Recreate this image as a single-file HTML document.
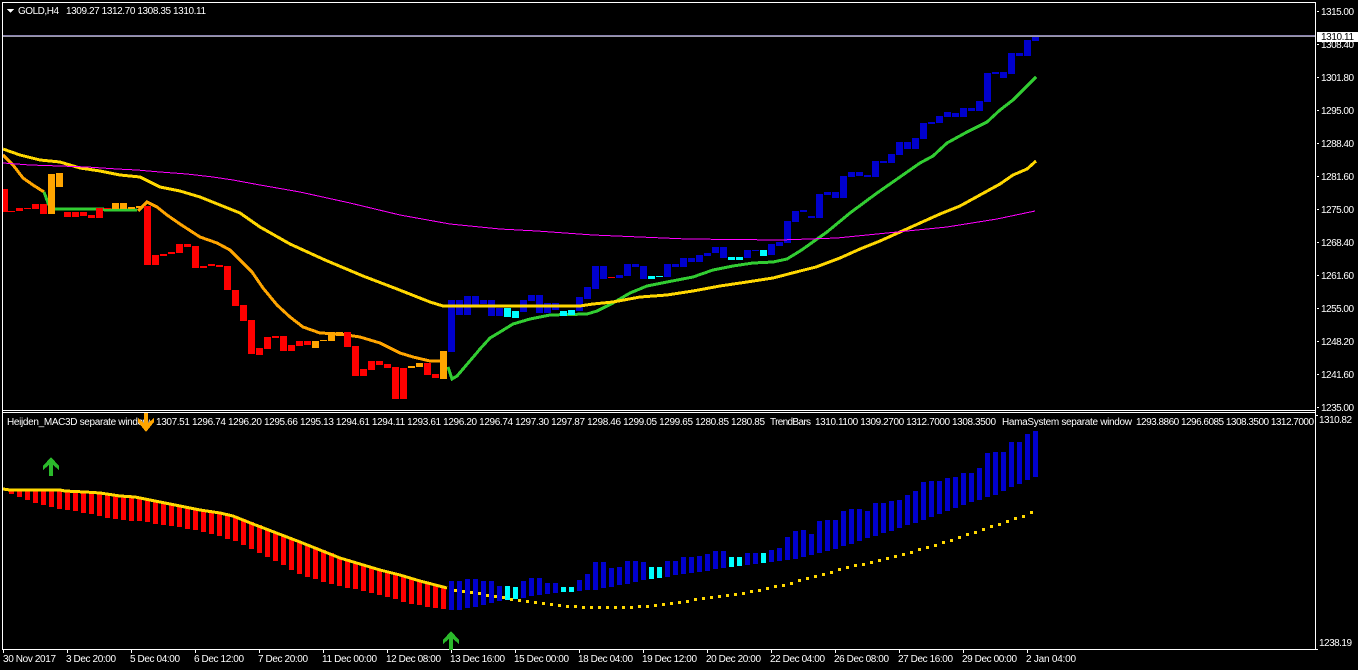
<!DOCTYPE html>
<html><head><meta charset="utf-8"><title>GOLD,H4</title>
<style>
html,body{margin:0;padding:0;background:#000;width:1358px;height:670px;overflow:hidden}
svg{display:block;position:absolute;left:0;top:0}
text{font-family:"Liberation Sans",sans-serif;font-size:10px;fill:#fff}
</style></head><body>
<svg width="1358" height="670" viewBox="0 0 1358 670" xmlns="http://www.w3.org/2000/svg">
<rect width="1358" height="670" fill="#000"/>
<defs><clipPath id="cp"><rect x="3" y="413" width="1312" height="20"/></clipPath></defs>
<g shape-rendering="crispEdges">
<!-- MAs below candles -->
<polyline fill="none" stroke="#ffa500" stroke-width="3" points="3,155 13,165 23,178 33,185 44,192"/>
<polyline fill="none" stroke="#ffa500" stroke-width="3" points="138,211 147,202 157,207 167,215 180,224 200,237 217,243 230,250 240,260 252,272 263,288 277,305 290,317 303,327 320,333 340,334 360,337 380,343 400,353 413,357 430,361 443,361"/>
<polyline fill="none" stroke="#32cd32" stroke-width="3" points="44,192 48,203 51,209 103,209 105,210 137,210"/>
<polyline fill="none" stroke="#32cd32" stroke-width="3" points="448,367 452,379 457,376 475,355 480,349 490,338 500,332 513,324 530,319 550,315 587,314 597,311 613,303 630,293 647,286 667,282 693,277 713,270 733,266 753,263 773,262 787,259 800,251 803,249 827,232 850,213 877,193 900,177 920,163 933,156 947,143 967,132 987,122 1000,110 1013,100 1036,77"/>
<!-- candles -->
<path fill="#ff0000" d="M3 189h5v23h-5zM8 211h7v1h-7zM16 208h7v3h-7zM24 208h7v1h-7zM32 204h7v5h-7zM40 204h7v10h-7zM64 212h7v5h-7zM72 212h7v5h-7zM80 212h7v4h-7zM88 215h7v3h-7zM96 208h7v10h-7zM104 208h7v1h-7zM144 206h7v59h-7zM152 255h7v10h-7zM160 254h7v2h-7zM168 252h7v2h-7zM176 244h7v9h-7zM184 244h7v3h-7zM192 246h7v22h-7zM200 266h7v2h-7zM208 264h7v2h-7zM216 265h7v2h-7zM224 266h7v24h-7zM232 290h7v16h-7zM240 305h7v16h-7zM248 320h7v34h-7zM256 348h7v7h-7zM264 337h7v12h-7zM272 336h7v2h-7zM280 336h7v15h-7zM288 345h7v6h-7zM296 341h7v5h-7zM304 341h7v4h-7zM344 332h7v15h-7zM352 346h7v30h-7zM360 369h7v7h-7zM368 361h7v9h-7zM376 361h7v4h-7zM384 364h7v4h-7zM392 367h7v32h-7zM400 368h7v31h-7zM424 363h7v12h-7zM432 374h7v4h-7zM608 277h7v1h-7z"/>
<path fill="#ffa500" d="M48 174h7v40h-7zM56 173h7v14h-7zM112 203h7v6h-7zM120 203h7v6h-7zM128 207h7v2h-7zM136 206h7v2h-7zM312 341h7v7h-7zM320 340h7v1h-7zM328 333h7v8h-7zM336 332h7v4h-7zM408 366h7v2h-7zM416 363h7v4h-7zM440 351h7v28h-7z"/>
<path fill="#0000cd" d="M448 300h7v52h-7zM456 300h7v15h-7zM464 296h7v19h-7zM472 296h7v9h-7zM480 300h7v4h-7zM488 300h7v16h-7zM496 308h7v8h-7zM520 300h7v12h-7zM528 295h7v6h-7zM536 295h7v18h-7zM544 303h7v10h-7zM552 303h7v7h-7zM576 297h7v14h-7zM584 287h7v12h-7zM592 266h7v23h-7zM600 266h7v13h-7zM616 275h7v3h-7zM624 264h7v12h-7zM632 264h7v3h-7zM640 266h7v13h-7zM664 264h7v13h-7zM672 264h7v3h-7zM680 258h7v9h-7zM688 258h7v4h-7zM696 255h7v7h-7zM704 253h7v3h-7zM712 247h7v6h-7zM720 247h7v11h-7zM744 250h7v8h-7zM752 250h7v1h-7zM768 244h7v11h-7zM776 242h7v4h-7zM784 221h7v22h-7zM792 211h7v11h-7zM800 210h7v2h-7zM808 216h7v2h-7zM816 194h7v24h-7zM824 192h7v3h-7zM832 192h7v6h-7zM840 176h7v22h-7zM848 172h7v5h-7zM856 172h7v4h-7zM864 175h7v2h-7zM872 161h7v16h-7zM880 161h7v2h-7zM888 154h7v9h-7zM896 142h7v13h-7zM904 142h7v7h-7zM912 138h7v11h-7zM920 123h7v16h-7zM928 122h7v2h-7zM936 116h7v7h-7zM944 112h7v5h-7zM952 113h7v4h-7zM960 108h7v9h-7zM968 108h7v3h-7zM976 101h7v10h-7zM984 73h7v29h-7zM992 72h7v2h-7zM1000 72h7v6h-7zM1008 53h7v21h-7zM1016 53h7v3h-7zM1024 40h7v16h-7zM1032 36h7v5h-7z"/>
<path fill="#00ffff" d="M504 308h7v9h-7zM512 311h7v7h-7zM560 311h7v5h-7zM568 310h7v5h-7zM648 276h7v3h-7zM656 276h7v1h-7zM728 257h7v3h-7zM736 257h7v3h-7zM760 250h7v6h-7z"/>
<!-- yellow and magenta on top -->
<polyline fill="none" stroke="#ffd700" stroke-width="3" points="3,149 20,155 40,160 60,162 80,168 100,171 120,175 140,177 160,187 180,191 200,197 220,205 240,213 260,227 290,244 325,260 363,276 397,289 430,302 443,306 580,306 593,304 613,302 640,297 667,295 693,291 720,286 747,282 773,278 800,271 816,267 840,258 860,249 880,241 900,232 920,223 940,214 960,206 980,195 1000,184 1013,175 1027,169 1036,161"/>
<polyline fill="none" stroke="#ff00ff" stroke-width="1" points="3,163 30,165 60,166 87,167 117,169 137,170 160,172 187,174 213,177 233,180 260,185 300,192 350,203 400,215 450,224 500,229 537,231 593,235 640,237 687,239 780,240 837,238 897,232 947,227 997,219 1035,211"/>
<!-- current price line -->
<rect x="3" y="35" width="1312" height="1" fill="#8a82ae"/>
<rect x="3" y="36" width="1312" height="1" fill="#9a98a8"/>
<!-- lower panel bars -->
<path fill="#ff0000" d="M9 490h5v4h-5zM17 490h5v7h-5zM25 490h5v10h-5zM33 490h5v13h-5zM41 490h5v15h-5zM49 490h5v17h-5zM57 490h5v19h-5zM65 491h5v19h-5zM73 491h5v20h-5zM81 492h5v21h-5zM89 492h5v22h-5zM97 493h5v23h-5zM105 494h5v24h-5zM113 495h5v24h-5zM121 496h5v24h-5zM129 497h5v24h-5zM137 498h5v23h-5zM145 499h5v23h-5zM153 501h5v23h-5zM161 503h5v22h-5zM169 505h5v21h-5zM177 506h5v21h-5zM185 507h5v22h-5zM193 509h5v21h-5zM201 510h5v22h-5zM209 512h5v22h-5zM217 513h5v23h-5zM225 514h5v25h-5zM233 516h5v25h-5zM241 519h5v26h-5zM249 522h5v27h-5zM257 525h5v28h-5zM265 529h5v28h-5zM273 532h5v29h-5zM281 535h5v30h-5zM289 538h5v32h-5zM297 541h5v33h-5zM305 544h5v33h-5zM313 547h5v32h-5zM321 550h5v32h-5zM329 553h5v31h-5zM337 557h5v29h-5zM345 559h5v29h-5zM353 562h5v27h-5zM361 564h5v27h-5zM369 567h5v26h-5zM377 569h5v26h-5zM385 571h5v26h-5zM393 573h5v26h-5zM401 575h5v27h-5zM409 578h5v26h-5zM417 580h5v25h-5zM425 582h5v25h-5zM433 584h5v24h-5zM441 586h5v23h-5z"/>
<path fill="#0000cd" d="M449 581h5v29h-5zM457 581h5v29h-5zM465 579h5v29h-5zM473 579h5v28h-5zM481 581h5v24h-5zM489 581h5v22h-5zM497 586h5v15h-5zM521 581h5v17h-5zM529 578h5v18h-5zM537 578h5v17h-5zM545 583h5v11h-5zM553 583h5v10h-5zM577 580h5v11h-5zM585 574h5v16h-5zM593 562h5v28h-5zM601 562h5v26h-5zM609 568h5v19h-5zM617 567h5v18h-5zM625 561h5v23h-5zM633 561h5v21h-5zM641 562h5v18h-5zM665 561h5v16h-5zM673 561h5v14h-5zM681 557h5v17h-5zM689 557h5v16h-5zM697 556h5v16h-5zM705 554h5v17h-5zM713 551h5v18h-5zM721 551h5v17h-5zM745 553h5v12h-5zM753 553h5v11h-5zM769 550h5v12h-5zM777 548h5v13h-5zM785 537h5v23h-5zM793 531h5v28h-5zM801 530h5v27h-5zM809 534h5v21h-5zM817 521h5v32h-5zM825 520h5v31h-5zM833 520h5v29h-5zM841 511h5v35h-5zM849 509h5v35h-5zM857 509h5v32h-5zM865 511h5v27h-5zM873 503h5v33h-5zM881 503h5v30h-5zM889 501h5v30h-5zM897 500h5v28h-5zM905 495h5v30h-5zM913 491h5v32h-5zM921 482h5v38h-5zM929 481h5v36h-5zM937 481h5v33h-5zM945 478h5v33h-5zM953 477h5v31h-5zM961 473h5v32h-5zM969 473h5v29h-5zM977 468h5v32h-5zM985 453h5v44h-5zM993 452h5v43h-5zM1001 452h5v39h-5zM1009 442h5v45h-5zM1017 442h5v42h-5zM1025 434h5v46h-5zM1033 431h5v46h-5z"/>
<path fill="#00ffff" d="M505 586h5v14h-5zM513 587h5v12h-5zM561 587h5v5h-5zM569 587h5v5h-5zM649 567h5v12h-5zM657 567h5v11h-5zM729 557h5v10h-5zM737 557h5v9h-5zM761 553h5v10h-5z"/>
<polyline fill="none" stroke="#ffd700" stroke-width="3" points="3,489 10,490 60,490 65,491 85,492 100,493 120,496 135,497 150,500 180,506 200,510 220,513 233,516 253,524 300,542 320,550 340,558 360,564 380,570 400,575 420,581 447,588"/>
<path fill="#ffd700" d="M454 589h3v3h-3zM462 590h3v3h-3zM470 591h3v3h-3zM478 592h3v3h-3zM486 594h3v3h-3zM494 595h3v3h-3zM502 596h3v3h-3zM510 598h3v3h-3zM518 599h3v3h-3zM526 600h3v3h-3zM534 601h3v3h-3zM542 602h3v3h-3zM550 603h3v3h-3zM558 604h3v3h-3zM566 605h3v3h-3zM574 605h3v3h-3zM582 606h3v3h-3zM590 606h3v3h-3zM598 606h3v3h-3zM606 606h3v3h-3zM614 606h3v3h-3zM622 606h3v3h-3zM630 606h3v3h-3zM638 605h3v3h-3zM646 605h3v3h-3zM654 604h3v3h-3zM662 603h3v3h-3zM670 602h3v3h-3zM678 601h3v3h-3zM686 600h3v3h-3zM694 598h3v3h-3zM702 597h3v3h-3zM710 596h3v3h-3zM718 595h3v3h-3zM726 594h3v3h-3zM734 593h3v3h-3zM742 592h3v3h-3zM750 590h3v3h-3zM758 589h3v3h-3zM766 587h3v3h-3zM774 585h3v3h-3zM782 584h3v3h-3zM790 582h3v3h-3zM798 579h3v3h-3zM806 577h3v3h-3zM814 575h3v3h-3zM822 573h3v3h-3zM830 571h3v3h-3zM838 568h3v3h-3zM846 566h3v3h-3zM854 564h3v3h-3zM862 563h3v3h-3zM870 561h3v3h-3zM878 559h3v3h-3zM886 557h3v3h-3zM894 555h3v3h-3zM902 553h3v3h-3zM910 551h3v3h-3zM918 548h3v3h-3zM926 546h3v3h-3zM934 544h3v3h-3zM942 541h3v3h-3zM950 539h3v3h-3zM958 536h3v3h-3zM966 533h3v3h-3zM974 531h3v3h-3zM982 528h3v3h-3zM990 525h3v3h-3zM998 523h3v3h-3zM1006 520h3v3h-3zM1014 517h3v3h-3zM1022 515h3v3h-3zM1030 511h3v3h-3z"/>
<!-- frame -->
<g fill="#fff">
<rect x="2" y="2" width="1314" height="1"/>
<rect x="2" y="2" width="1" height="648"/>
<rect x="1315" y="2" width="1" height="648"/>
<rect x="2" y="410" width="1314" height="1"/>
<rect x="2" y="412" width="1314" height="1"/>
<rect x="2" y="649" width="1314" height="1"/>
<path d="M1317 11h2v1h-2zM1317 44h2v1h-2zM1317 77h2v1h-2zM1317 110h2v1h-2zM1317 143h2v1h-2zM1317 176h2v1h-2zM1317 209h2v1h-2zM1317 242h2v1h-2zM1317 275h2v1h-2zM1317 308h2v1h-2zM1317 341h2v1h-2zM1317 374h2v1h-2zM1317 407h2v1h-2zM1316 415h2v1h-2zM1316 649h2v1h-2z"/>
<path d="M3 650h1v3h-1zM67 650h1v3h-1zM131 650h1v3h-1zM195 650h1v3h-1zM259 650h1v3h-1zM323 650h1v3h-1zM387 650h1v3h-1zM451 650h1v3h-1zM515 650h1v3h-1zM579 650h1v3h-1zM643 650h1v3h-1zM707 650h1v3h-1zM771 650h1v3h-1zM835 650h1v3h-1zM899 650h1v3h-1zM963 650h1v3h-1zM1027 650h1v3h-1z"/>
<path d="M7 9h7l-3.5 4z"/>
</g>
</g>
<!-- header -->
<text x="18" y="14" textLength="41">GOLD,H4</text>
<text x="66" y="14" textLength="140">1309.27 1312.70 1308.35 1310.11</text>
<!-- price axis -->
<g>
<text x="1321" y="15" textLength="33">1315.00</text>
<text x="1321" y="48" textLength="33">1308.40</text>
<text x="1321" y="81" textLength="33">1301.80</text>
<text x="1321" y="114" textLength="33">1295.00</text>
<text x="1321" y="147" textLength="33">1288.40</text>
<text x="1321" y="180" textLength="33">1281.60</text>
<text x="1321" y="213" textLength="33">1275.00</text>
<text x="1321" y="246" textLength="33">1268.40</text>
<text x="1321" y="279" textLength="33">1261.60</text>
<text x="1321" y="312" textLength="33">1255.00</text>
<text x="1321" y="345" textLength="33">1248.20</text>
<text x="1321" y="378" textLength="33">1241.60</text>
<text x="1321" y="411" textLength="33">1235.00</text>
<text x="1319" y="423" textLength="33">1310.82</text>
<text x="1319" y="646" textLength="33">1238.19</text>
</g>
<rect x="1317" y="32" width="41" height="10" fill="#fff" shape-rendering="crispEdges"/>
<text x="1321" y="40" textLength="33" style="fill:#000">1310.11</text>
<!-- panel text -->
<g clip-path="url(#cp)">
<text x="7" y="425" textLength="143">Heijden_MAC3D separate window</text>
<text x="156" y="425" textLength="609">1307.51 1296.74 1296.20 1295.66 1295.13 1294.61 1294.11 1293.61 1296.20 1296.74 1297.30 1297.87 1298.46 1299.05 1299.65 1280.85 1280.85</text>
<text x="770" y="425" textLength="41">TrendBars</text>
<text x="815" y="425" textLength="181">1310.1100 1309.2700 1312.7000 1308.3500</text>
<text x="1002" y="425" textLength="130">HamaSystem separate window</text>
<text x="1136" y="425" textLength="178">1293.8860 1296.6085 1308.3500 1312.7000</text>
</g>
<!-- time axis -->
<g>
<text x="3" y="662" textLength="53">30 Nov 2017</text>
<text x="66" y="662" textLength="50">3 Dec 20:00</text>
<text x="130" y="662" textLength="50">5 Dec 04:00</text>
<text x="194" y="662" textLength="50">6 Dec 12:00</text>
<text x="258" y="662" textLength="50">7 Dec 20:00</text>
<text x="322" y="662" textLength="55">11 Dec 00:00</text>
<text x="386" y="662" textLength="55">12 Dec 08:00</text>
<text x="450" y="662" textLength="55">13 Dec 16:00</text>
<text x="514" y="662" textLength="55">15 Dec 00:00</text>
<text x="578" y="662" textLength="55">18 Dec 04:00</text>
<text x="642" y="662" textLength="55">19 Dec 12:00</text>
<text x="706" y="662" textLength="55">20 Dec 20:00</text>
<text x="770" y="662" textLength="55">22 Dec 04:00</text>
<text x="834" y="662" textLength="55">26 Dec 08:00</text>
<text x="898" y="662" textLength="55">27 Dec 16:00</text>
<text x="962" y="662" textLength="55">29 Dec 00:00</text>
<text x="1026" y="662" textLength="50">2 Jan 04:00</text>
</g>
<!-- arrows -->
<g shape-rendering="crispEdges">
<polygon fill="#2bb92b" points="51,457 59,466 59,470 53,465 53,476 49,476 49,465 43,470 43,466"/>
<polygon fill="#ffa500" points="146,432 154,422 154,418 148,423 148,413 144,413 144,423 138,418 138,422"/>
<polygon fill="#2bb92b" points="451,631 459,640 459,644 453,639 453,650 449,650 449,639 443,644 443,640"/>
</g>
</svg>
</body></html>
